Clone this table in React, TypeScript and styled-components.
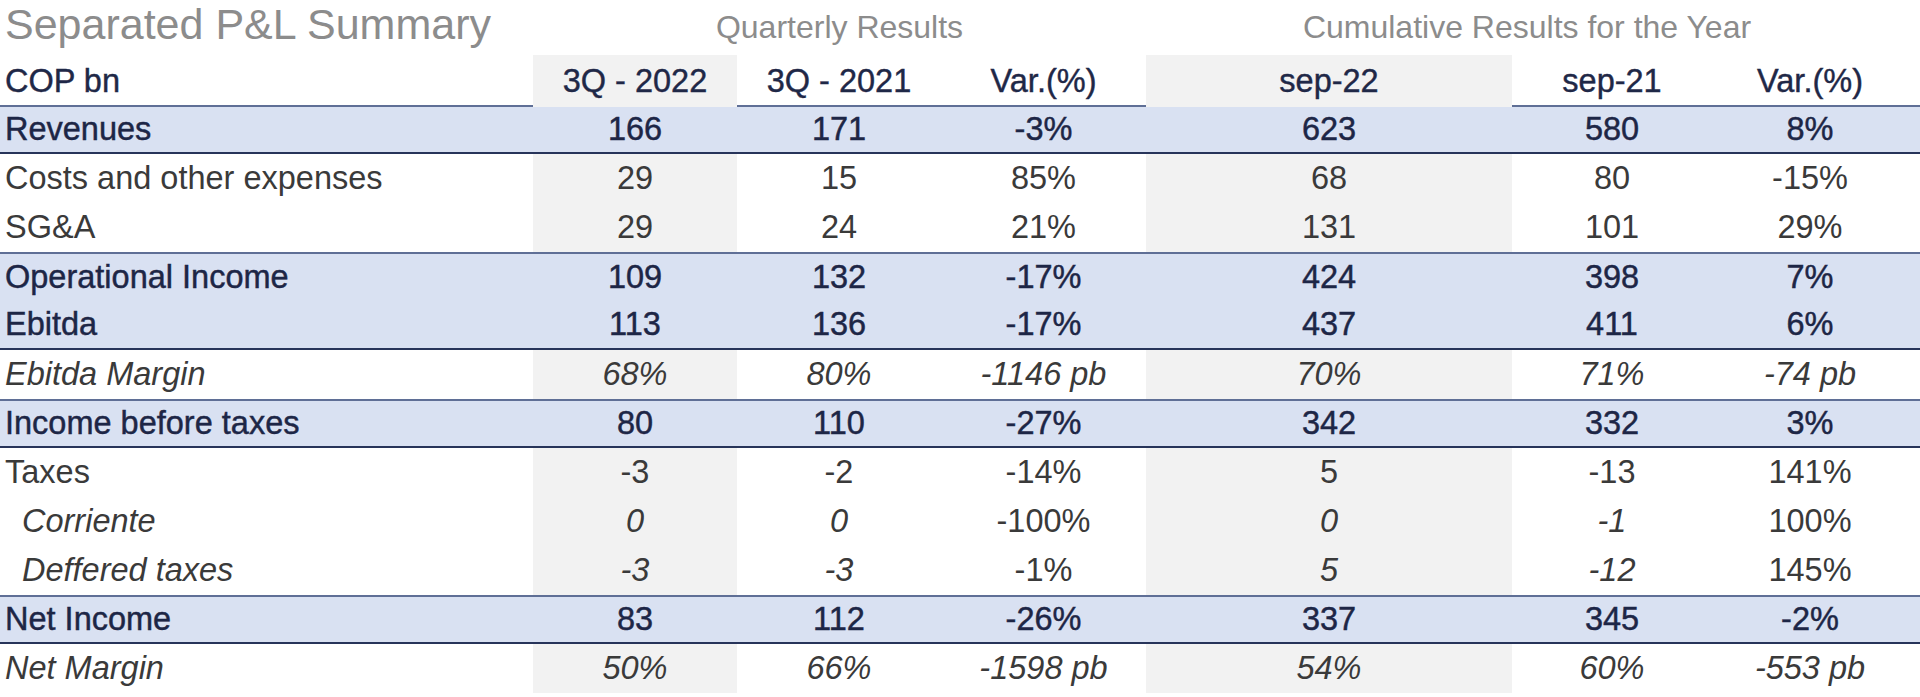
import styled, { createGlobalStyle, css } from 'styled-components';

type Kind = 'plain' | 'total' | 'ratio' | 'sub';

interface Line {
  label: string;
  kind: Kind;
  values: string[];
  edge?: 'top' | 'bottom' | 'both';
}

const lines: Line[] = [
  { label: 'Revenues', kind: 'total', values: ['166', '171', '-3%', '623', '580', '8%'], edge: 'both' },
  { label: 'Costs and other expenses', kind: 'plain', values: ['29', '15', '85%', '68', '80', '-15%'] },
  { label: 'SG&A', kind: 'plain', values: ['29', '24', '21%', '131', '101', '29%'] },
  { label: 'Operational Income', kind: 'total', values: ['109', '132', '-17%', '424', '398', '7%'], edge: 'top' },
  { label: 'Ebitda', kind: 'total', values: ['113', '136', '-17%', '437', '411', '6%'], edge: 'bottom' },
  { label: 'Ebitda Margin', kind: 'ratio', values: ['68%', '80%', '-1146 pb', '70%', '71%', '-74 pb'] },
  { label: 'Income before taxes', kind: 'total', values: ['80', '110', '-27%', '342', '332', '3%'], edge: 'both' },
  { label: 'Taxes', kind: 'plain', values: ['-3', '-2', '-14%', '5', '-13', '141%'] },
  { label: 'Corriente', kind: 'sub', values: ['0', '0', '-100%', '0', '-1', '100%'] },
  { label: 'Deffered taxes', kind: 'sub', values: ['-3', '-3', '-1%', '5', '-12', '145%'] },
  { label: 'Net Income', kind: 'total', values: ['83', '112', '-26%', '337', '345', '-2%'], edge: 'both' },
  { label: 'Net Margin', kind: 'ratio', values: ['50%', '66%', '-1598 pb', '54%', '60%', '-553 pb'] },
];

const headers = ['3Q - 2022', '3Q - 2021', 'Var.(%)', 'sep-22', 'sep-21', 'Var.(%)'];

// current-period columns carry the grey shading
const shaded = [true, false, false, true, false, false];
// variation columns stay upright on the sub rows
const isVar = [false, false, true, false, false, true];

export default function App() {
  return (
    <>
      <GlobalStyle />
      <Sheet>
        <TitleBar>
          <Title>Separated P&amp;L Summary</Title>
          <GroupTitle>Quarterly Results</GroupTitle>
          <GroupTitle>Cumulative Results for the Year</GroupTitle>
        </TitleBar>

        <HeaderRow>
          <HeadLabel>COP bn</HeadLabel>
          {headers.map((h, i) => (
            <HeadCell key={i} $shade={shaded[i]}>
              {h}
            </HeadCell>
          ))}
          <span />
        </HeaderRow>

        {lines.map((line) => {
          const band = line.kind === 'total';
          return (
            <Row key={line.label} $band={band} $edge={line.edge}>
              <Label $kind={line.kind}>{line.label}</Label>
              {line.values.map((v, i) => (
                <Cell
                  key={i}
                  $shade={shaded[i] && !band}
                  $kind={line.kind}
                  $italic={line.kind === 'ratio' || (line.kind === 'sub' && !isVar[i])}
                >
                  {v}
                </Cell>
              ))}
              <span />
            </Row>
          );
        })}
      </Sheet>
    </>
  );
}

const GlobalStyle = createGlobalStyle`
  body {
    margin: 0;
    background: #fff;
    font-family: 'Liberation Sans', Arial, sans-serif;
  }
`;

const columns = '533px 204px 204px 205px 366px 200px 196px 12px';

const Sheet = styled.div`
  width: 1920px;
`;

const TitleBar = styled.div`
  display: grid;
  grid-template-columns: 533px 613px 762px 12px;
  height: 55px;
  align-items: start;
`;

const Title = styled.div`
  padding-left: 5px;
  font-size: 43px;
  line-height: 48px;
  color: #8c8c8c;
  white-space: nowrap;
`;

const GroupTitle = styled.div`
  text-align: center;
  font-size: 32px;
  line-height: 48px;
  padding-top: 3px;
  color: #8c8c8c;
  white-space: nowrap;
`;

const HeaderRow = styled.div`
  display: grid;
  grid-template-columns: ${columns};
  height: 50px;
  font-size: 32.5px;
  color: #1f2847;
  -webkit-text-stroke: 0.4px #1f2847;
`;

const HeadLabel = styled.div`
  padding-left: 5px;
  line-height: 52px;
`;

const HeadCell = styled.div<{ $shade: boolean }>`
  text-align: center;
  line-height: 52px;
  white-space: nowrap;
  background: ${(p) => (p.$shade ? '#f2f2f2' : 'transparent')};
`;

const Row = styled.div<{ $band: boolean; $edge?: 'top' | 'bottom' | 'both' }>`
  display: grid;
  grid-template-columns: ${columns};
  height: 49px;
  box-sizing: border-box;
  font-size: 32.5px;
  background: ${(p) => (p.$band ? '#d9e1f2' : '#fff')};
  ${(p) =>
    (p.$edge === 'top' || p.$edge === 'both') &&
    css`
      border-top: 2px solid #5f6f96;
    `}
  ${(p) =>
    (p.$edge === 'bottom' || p.$edge === 'both') &&
    css`
      border-bottom: 2px solid #27345a;
    `}
`;

const strong = css`
  color: #1d2646;
  -webkit-text-stroke: 0.45px #1d2646;
`;

const Label = styled.div<{ $kind: Kind }>`
  display: flex;
  align-items: center;
  padding-left: ${(p) => (p.$kind === 'sub' ? '22px' : '5px')};
  white-space: nowrap;
  color: #3a3a3a;
  font-style: ${(p) => (p.$kind === 'ratio' || p.$kind === 'sub' ? 'italic' : 'normal')};
  ${(p) => p.$kind === 'total' && strong}
`;

const Cell = styled.div<{ $shade: boolean; $kind: Kind; $italic: boolean }>`
  display: flex;
  align-items: center;
  justify-content: center;
  white-space: nowrap;
  color: #3a3a3a;
  font-style: ${(p) => (p.$italic ? 'italic' : 'normal')};
  background: ${(p) => (p.$shade ? '#f2f2f2' : 'transparent')};
  ${(p) => p.$kind === 'total' && strong}
`;
